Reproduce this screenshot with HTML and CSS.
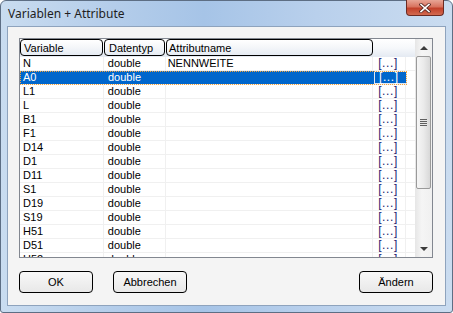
FILE: index.html
```html
<!DOCTYPE html>
<html lang="de">

<head>
    <meta charset="UTF-8">
    <title>Variablen + Attribute</title>
    <link rel="stylesheet" href="styles.css">
</head>

<body>
    <div class="window">
        <div class="titlebar">
            <span class="title">Variablen + Attribute</span>
            <div class="close">
                <svg width="12" height="10" viewBox="0 0 12 10">
                    <path d="M2 1.5 L10 8.5 M10 1.5 L2 8.5" stroke="#5a2a24" stroke-width="3.2" stroke-linecap="square" fill="none"/>
                    <path d="M2 1.5 L10 8.5 M10 1.5 L2 8.5" stroke="#ffffff" stroke-width="1.6" stroke-linecap="square" fill="none"/>
                </svg>
            </div>
        </div>

        <div class="client">
            <div class="listview">
                <div class="grid">
                    <div class="header">
                        <div class="hcell col-var">Variable</div>
                        <div class="hcell col-type">Datentyp</div>
                        <div class="hcell col-attr">Attributname</div>
                    </div>
                    <div class="rows">
                        <div class="row"><div class="cell col-var">N</div><div class="cell col-type">double</div><div class="cell col-attr">NENNWEITE</div><div class="cell col-btn">[...]</div><div class="cell col-end"></div></div>
                        <div class="row selected"><div class="cell col-var">A0</div><div class="cell col-type">double</div><div class="cell col-attr"></div><div class="cell col-btn">[...]</div><div class="cell col-end"></div></div>
                        <div class="row"><div class="cell col-var">L1</div><div class="cell col-type">double</div><div class="cell col-attr"></div><div class="cell col-btn">[...]</div><div class="cell col-end"></div></div>
                        <div class="row"><div class="cell col-var">L</div><div class="cell col-type">double</div><div class="cell col-attr"></div><div class="cell col-btn">[...]</div><div class="cell col-end"></div></div>
                        <div class="row"><div class="cell col-var">B1</div><div class="cell col-type">double</div><div class="cell col-attr"></div><div class="cell col-btn">[...]</div><div class="cell col-end"></div></div>
                        <div class="row"><div class="cell col-var">F1</div><div class="cell col-type">double</div><div class="cell col-attr"></div><div class="cell col-btn">[...]</div><div class="cell col-end"></div></div>
                        <div class="row"><div class="cell col-var">D14</div><div class="cell col-type">double</div><div class="cell col-attr"></div><div class="cell col-btn">[...]</div><div class="cell col-end"></div></div>
                        <div class="row"><div class="cell col-var">D1</div><div class="cell col-type">double</div><div class="cell col-attr"></div><div class="cell col-btn">[...]</div><div class="cell col-end"></div></div>
                        <div class="row"><div class="cell col-var">D11</div><div class="cell col-type">double</div><div class="cell col-attr"></div><div class="cell col-btn">[...]</div><div class="cell col-end"></div></div>
                        <div class="row"><div class="cell col-var">S1</div><div class="cell col-type">double</div><div class="cell col-attr"></div><div class="cell col-btn">[...]</div><div class="cell col-end"></div></div>
                        <div class="row"><div class="cell col-var">D19</div><div class="cell col-type">double</div><div class="cell col-attr"></div><div class="cell col-btn">[...]</div><div class="cell col-end"></div></div>
                        <div class="row"><div class="cell col-var">S19</div><div class="cell col-type">double</div><div class="cell col-attr"></div><div class="cell col-btn">[...]</div><div class="cell col-end"></div></div>
                        <div class="row"><div class="cell col-var">H51</div><div class="cell col-type">double</div><div class="cell col-attr"></div><div class="cell col-btn">[...]</div><div class="cell col-end"></div></div>
                        <div class="row"><div class="cell col-var">D51</div><div class="cell col-type">double</div><div class="cell col-attr"></div><div class="cell col-btn">[...]</div><div class="cell col-end"></div></div>
                        <div class="row"><div class="cell col-var">H52</div><div class="cell col-type">double</div><div class="cell col-attr"></div><div class="cell col-btn">[...]</div><div class="cell col-end"></div></div>
                    </div>
                </div>

                <div class="scrollbar">
                    <div class="sb-arrow"><span class="tri-up"></span></div>
                    <div class="sb-track">
                        <div class="sb-thumb">
                            <div class="grip"></div>
                        </div>
                    </div>
                    <div class="sb-arrow"><span class="tri-down"></span></div>
                </div>
            </div>

            <div class="buttons">
                <button class="btn">OK</button>
                <button class="btn">Abbrechen</button>
                <span class="spacer"></span>
                <button class="btn">Ändern</button>
            </div>
        </div>
    </div>
</body>

</html>
```

FILE: styles.css
```css
body {
    margin: 0;
    padding: 0;
    font-family: "Liberation Sans", Arial, sans-serif;
    font-size: 11px;
    color: #000;
    background: #fff;
}

.window {
    width: 453px;
    height: 313px;
    box-sizing: border-box;
    border: 1px solid #5d6e84;
    border-radius: 6px 6px 3px 3px;
    background: linear-gradient(to right, #c9dcf0 0%, #b4cdea 25%, #a6c4e7 45%, #b9d0ec 70%, #cadcf0 100%);
    display: flex;
    flex-direction: column;
}

.titlebar {
    height: 25px;
    display: flex;
    justify-content: space-between;
    align-items: flex-start;
}

.title {
    font-family: "Noto Sans", "Liberation Sans", sans-serif;
    font-size: 12px;
    color: #1e1e1e;
    padding: 4px 0 0 7px;
}

.close {
    width: 38px;
    height: 16px;
    margin: -1px 8px 0 0;
    box-sizing: border-box;
    border: 1px solid #6b2a22;
    border-top: none;
    border-radius: 0 0 4px 4px;
    background: linear-gradient(#e8a596 0%, #d8735f 45%, #c2402a 55%, #d26a50 100%);
    display: flex;
    justify-content: center;
    align-items: center;
}

.client {
    flex: 1;
    margin: 0 6px 6px 6px;
    border: 1px solid #8ea3bd;
    background: #f4f4f4;
    padding: 11px 12px 0 11px;
    display: flex;
    flex-direction: column;
}

.listview {
    height: 220px;
    box-sizing: border-box;
    border: 1px solid #828790;
    background: #fff;
    display: flex;
    overflow: hidden;
}

.grid {
    width: 396px;
    overflow: hidden;
}

.header {
    height: 18px;
    display: flex;
    background: linear-gradient(#ffffff 0%, #f6f8fb 50%, #e4eaf2 100%);
}

.hcell {
    height: 17px;
    box-sizing: border-box;
    margin-right: 1px;
    border: 1px solid #000;
    border-radius: 4px;
    padding: 1px 0 0 2px;
    line-height: 14px;
    background: linear-gradient(#ffffff 0%, #f4f6f9 50%, #e6ecf4 100%);
}

.hcell.col-var { width: 83px; }
.hcell.col-type { width: 61px; }
.hcell.col-attr { width: 207px; }

.row {
    display: flex;
    height: 14px;
    box-sizing: border-box;
    border-bottom: 1px solid #f0f0f0;
}

.cell {
    box-sizing: border-box;
    border-right: 1px solid #f0f0f0;
    line-height: 13px;
    white-space: nowrap;
    overflow: hidden;
}

.col-var { width: 84px; padding-left: 3px; }
.col-type { width: 62px; padding-left: 4px; }
.col-attr { width: 208px; padding-left: 2px; }
.col-btn { width: 33px; padding-left: 5px; color: #1c1c70; font-size: 12px; letter-spacing: 0.6px; }
.col-end { width: 9px; border-right: none; }

.row.selected {
    background: #0066cc;
    color: #fff;
    outline: 1px dotted #f3a33c;
    outline-offset: -1px;
    width: 387px;
}

.row.selected .cell {
    border-right-color: #0066cc;
}

.row.selected .col-btn {
    color: #fff;
    border: 1px solid #dfe8f4;
    padding-left: 4px;
    line-height: 11px;
    overflow: visible;
}

.row.selected .col-end {
    display: none;
}

.scrollbar {
    width: 17px;
    display: flex;
    flex-direction: column;
    background: linear-gradient(to right, #e6e6e6, #f5f5f5 40%, #f0f0f0);
}

.sb-arrow {
    height: 17px;
    display: flex;
    justify-content: center;
    align-items: center;
}

.tri-up {
    width: 0;
    height: 0;
    border-left: 4px solid transparent;
    border-right: 4px solid transparent;
    border-bottom: 4px solid #3c3c3c;
}

.tri-down {
    width: 0;
    height: 0;
    border-left: 4px solid transparent;
    border-right: 4px solid transparent;
    border-top: 4px solid #3c3c3c;
}

.sb-track {
    flex: 1;
}

.sb-thumb {
    height: 133px;
    margin: 0 0 0 1px;
    width: 15px;
    box-sizing: border-box;
    border: 1px solid #9a9a9a;
    border-radius: 2px;
    background: linear-gradient(to right, #f6f6f6 0%, #ebebeb 50%, #d8d8d8 100%);
    display: flex;
    justify-content: center;
    align-items: center;
}

.grip {
    width: 7px;
    height: 7px;
    background: repeating-linear-gradient(#5f5f5f 0px, #5f5f5f 1px, #e8e8e8 1px, #e8e8e8 2px);
}

.buttons {
    display: flex;
    margin-top: 13px;
}

.btn {
    width: 74px;
    height: 22px;
    margin-right: 20px;
    border: 1px solid #000;
    border-radius: 4px;
    background: linear-gradient(#f8f8f8, #f0f0f0 50%, #e8e8e8);
    font-family: "Liberation Sans", Arial, sans-serif;
    font-size: 11px;
    color: #000;
    padding: 0;
}

.spacer {
    flex: 1;
}

.btn:last-child {
    margin-right: 0;
}
```
